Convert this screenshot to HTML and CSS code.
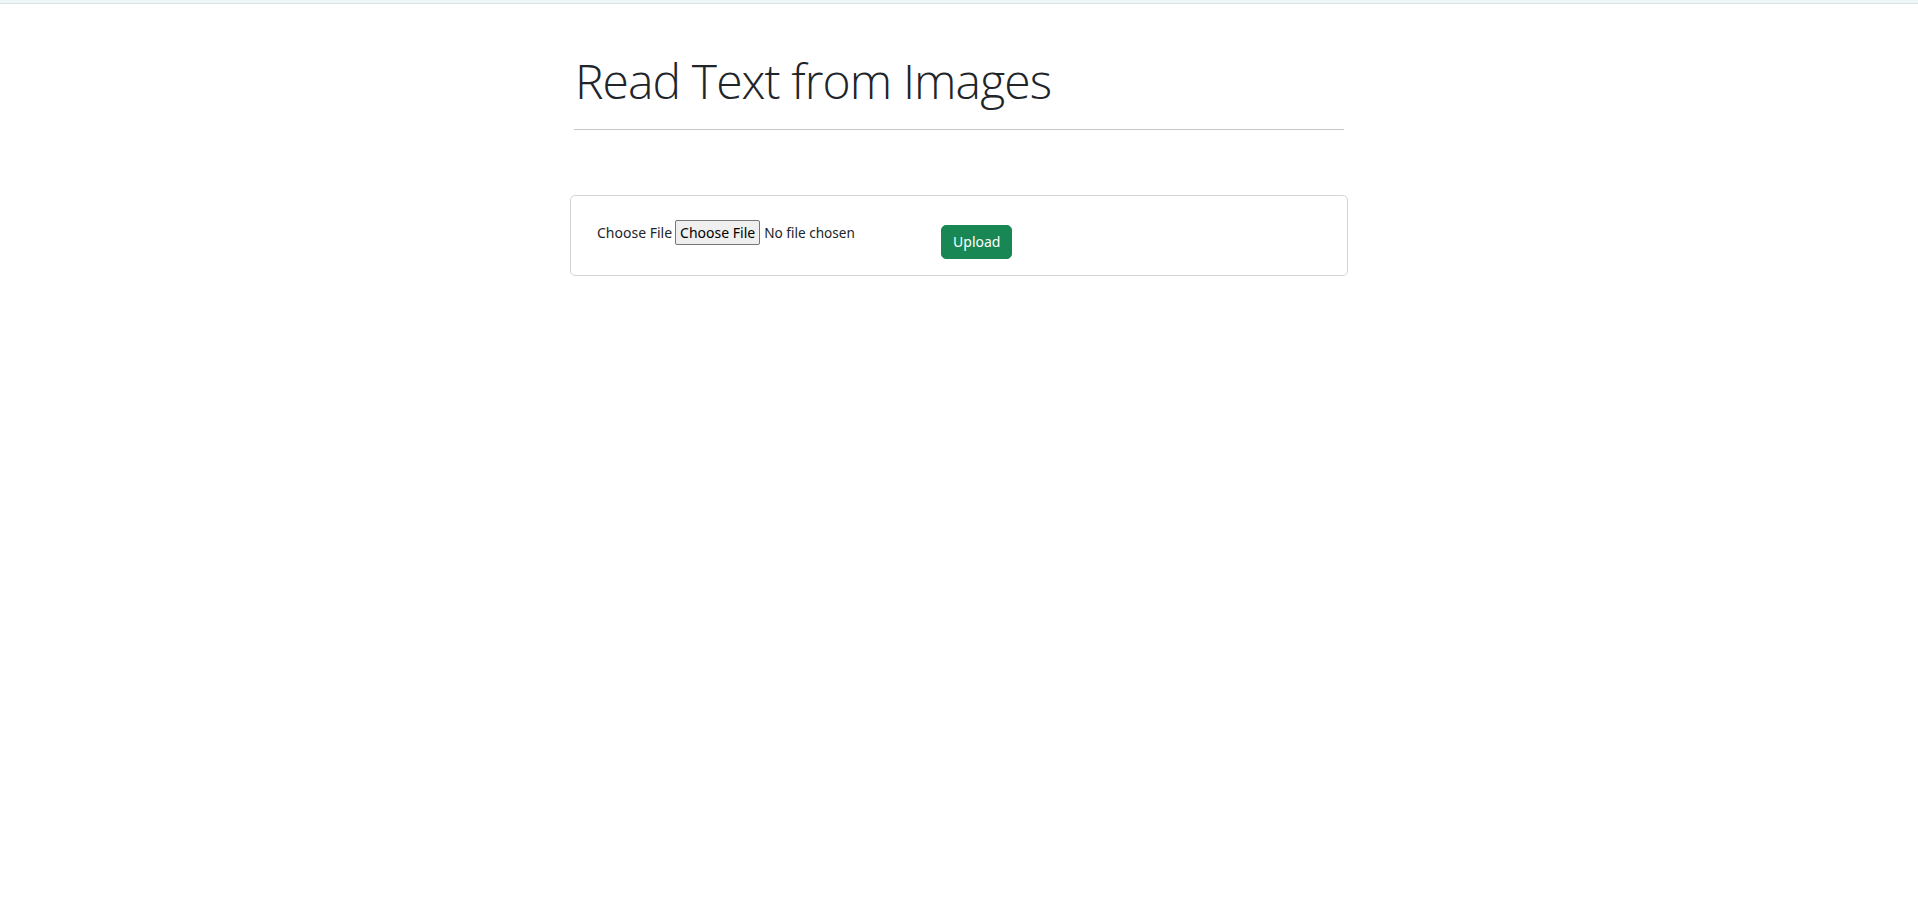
FILE: index.html
```html
<!DOCTYPE html>
<html lang="en">
<head>
<meta charset="utf-8">
<title>Read Text from Images</title>
<link rel="stylesheet" href="styles.css">
</head>
<body>
<div class="topbar"></div>
<main class="page">
  <header class="header">
    <h1 class="title">Read Text from Images</h1>
    <hr class="rule">
  </header>
  <section class="card">
    <form class="upload-form">
      <div class="file-group">
        <label class="file-label" for="file">Choose File</label>
        <input class="file-input" id="file" type="file">
      </div>
      <button class="btn-upload" type="button">Upload</button>
    </form>
  </section>
</main>
</body>
</html>
```
FILE: styles.css
```css
* { box-sizing: border-box; }
html, body { margin: 0; padding: 0; background: #fff; }
body {
  font-family: "Noto Sans", "Open Sans", sans-serif;
  color: #212529;
}
.topbar {
  height: 4px;
  background: #eef7f7;
  border-bottom: 1px solid #d6e4e4;
}
.page {
  width: 778px;
  margin: 0 auto;
}
.header {
  padding: 0 4px;
}
.title {
  margin: 47px 0 0 1px;
  font-family: "Open Sans", sans-serif;
  font-weight: 300;
  font-size: 48px;
  letter-spacing: -0.9px;
  line-height: 60px;
  color: #212529;
}
.rule {
  margin: 18px 0 0;
  border: 0;
  border-top: 1px solid #c8c8c8;
}
.card {
  margin-top: 65px;
  border: 1px solid #d4d4d4;
  border-radius: 5px;
  padding: 24px 26px 16px;
}
.upload-form {
  display: flex;
  align-items: flex-start;
}
.file-group {
  display: flex;
  align-items: center;
  font-size: 14px;
}
.file-label {
  margin-right: 3px;
}
.file-input {
  width: 250px;
  font-family: "Noto Sans", sans-serif;
  font-size: 13.6px;
  color: #212529;
}
.file-input::file-selector-button {
  font-family: "Noto Sans", sans-serif;
  font-size: 14px;
  color: #000;
  background: #efefef;
  border: 1px solid #767676;
  border-radius: 2px;
  padding: 2px 4px;
  margin-right: 4px;
}
.btn-upload {
  margin-left: 16px;
  margin-top: 5px;
  font-family: "Noto Sans", sans-serif;
  font-size: 14px;
  line-height: 20px;
  padding: 6px 11px;
  color: #fff;
  background: #198754;
  border: 1px solid #198754;
  border-radius: 5px;
}
```
